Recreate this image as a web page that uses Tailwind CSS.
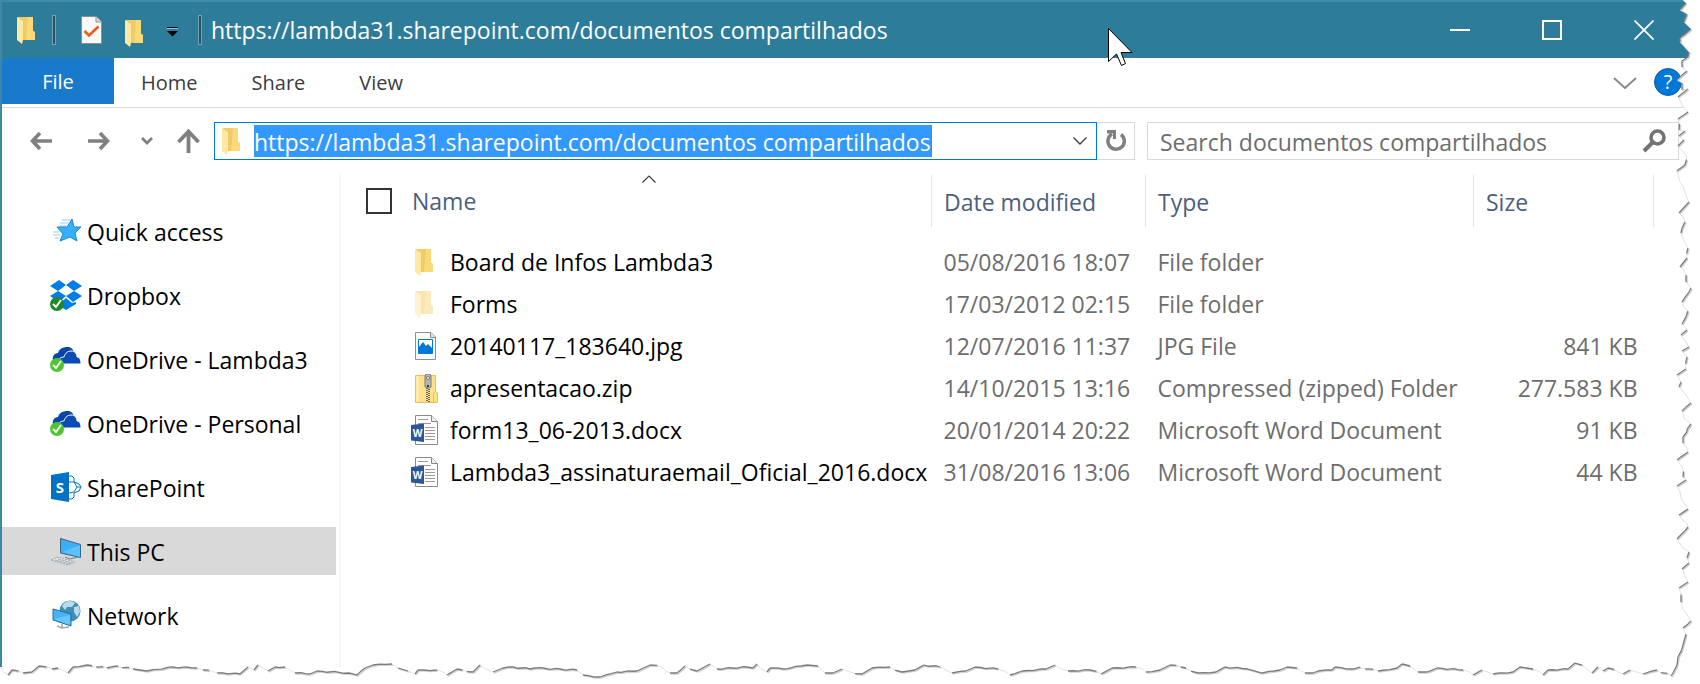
<!DOCTYPE html>
<html lang="en">
  <head>
    <meta charset="UTF-8" />
    <meta name="viewport" content="width=device-width, initial-scale=1.0" />
    <title>documentos compartilhados</title>
    <script src="https://cdn.jsdelivr.net/npm/@tailwindcss/browser@4"></script>
  </head>
  <body class="bg-white">
    <!-- Shared icons -->
    <svg class="hidden" aria-hidden="true">
      <symbol id="folder" viewBox="0 0 18 27">
        <path d="M1 0H16V14L18 15V23H4Z" fill="#f0cb68" />
        <path d="M11 0H16V14L18 15V23H9Z" fill="#f9d978" />
        <path d="M0 0L6 4V23L5 27L0 23Z" fill="#ffe8a3" />
      </symbol>
      <symbol id="onedrive" viewBox="0 0 32 26">
        <path d="M3 13C2 9 5 6 8 6C9 2 13 0 17 0C21 0 23 2 24 5L20 8L12 13Z" fill="#0a45a8" />
        <path d="M8 16C8 11 12 10 14 10C15 6 18 4 21 4C25 4 27 7 27 10C30 10 31 13 31 17H9Z" fill="#0d4bb5" stroke="#fff" />
        <circle cx="7" cy="18" r="7" fill="#4cc62f" />
        <path d="M3 18L6 21L11 14" fill="none" stroke="#fff" stroke-width="2" />
      </symbol>
      <symbol id="word" viewBox="0 0 27 30">
        <path d="M4.500 .5H20.500L26.500 6.500V29.500H4.500Z" fill="#fff" stroke="#8a8a8a" />
        <path d="M20.500 .5V6.500H26.500" fill="#eee" stroke="#8a8a8a" />
        <path d="M7 4.500H17M7 8.500H20M14 12.500H24M14 15.500H24M14 18.500H24M14 21.500H24M14 24.500H24" stroke="#9a9a9a" />
        <path d="M0 10L13 8.500V27L0 25.500Z" fill="#2b579a" />
        <text x="6.500" y="21.500" text-anchor="middle" font-family="Open Sans" font-weight="700" font-size="10" fill="#fff">W</text>
      </symbol>
    </svg>

    <div class="relative min-h-screen pb-4 overflow-hidden font-['Open_Sans',sans-serif] text-[23px] leading-8 text-black">
      <div class="flex flex-col min-h-[667px] border-l-2 border-[#3f87a2]">
        <!-- Title bar -->
        <header class="flex items-center h-[58px] border-t-2 border-[#428ba5] bg-[#2d7c9a] pl-[15px] pr-[10px] text-white">
          <svg class="w-[18px] h-[27px]"><use href="#folder" /></svg>
          <span class="ml-[17px] w-1 h-[30px] border border-[#6ba3b8] bg-[#34505c]"></span>
          <button class="ml-[25px]" aria-label="Properties">
            <svg class="w-[21px] h-7" viewBox="0 0 21 28">
              <path d="M.5 .5H15L20.500 6V27.500H.5Z" fill="#f8f8f8" stroke="#8f8f8f" />
              <path d="M15 .5V6H20.500" fill="#ddd" stroke="#8f8f8f" />
              <path d="M3.500 15L8 19.500L17.500 10.500" fill="none" stroke="#f25a13" stroke-width="2.500" />
            </svg>
          </button>
          <button class="ml-[23px] pt-[6px]" aria-label="New folder">
            <svg class="w-[18px] h-[27px]"><use href="#folder" /></svg>
          </button>
          <button class="ml-[24px] pt-1" aria-label="Customize toolbar">
            <svg class="w-[11px] h-[10px]" viewBox="0 0 11 10">
              <path d="M0 0H11V1H0Z" fill="#000" />
              <path d="M0 1H11V2H0Z" fill="#9cc2d0" />
              <path d="M0 4H11L5.500 9.500Z" fill="#000" />
            </svg>
          </button>
          <span class="ml-[20px] w-1 h-[30px] border border-[#6ba3b8] bg-[#34505c]"></span>
          <h1 class="ml-[9px] flex-1 truncate">https://lambda31.sharepoint.com/documentos compartilhados</h1>
          <button class="flex w-[92px] justify-center" aria-label="Minimize">
            <svg class="w-5 h-5" viewBox="0 0 20 20"><path d="M0 10H20" stroke="#fff" stroke-width="2" /></svg>
          </button>
          <button class="flex w-[92px] justify-center" aria-label="Maximize">
            <svg class="w-5 h-5" viewBox="0 0 20 20"><path d="M1 1H19V19H1Z" fill="none" stroke="#fff" stroke-width="2" /></svg>
          </button>
          <button class="flex w-[92px] justify-center" aria-label="Close">
            <svg class="w-5 h-5" viewBox="0 0 20 20"><path d="M.5 .5L19.500 19.500M19.500 .5L.5 19.500" stroke="#fff" stroke-width="1.700" /></svg>
          </button>
        </header>

        <!-- Ribbon tabs -->
        <nav class="flex h-[50px] items-start border-b border-[#dadbdc] pr-[18px] text-xl text-[#3c3c3c]">
          <button class="h-[46px] w-28 bg-[#1979ca] pt-[2px] text-white">File</button>
          <button class="h-[49px] px-[27px]">Home</button>
          <button class="h-[49px] px-[27px]">Share</button>
          <button class="h-[49px] px-[27px]">View</button>
          <button class="ml-auto flex h-[49px] items-center" aria-label="Expand the ribbon">
            <svg class="w-6 h-3" viewBox="0 0 24 12"><path d="M1 1L12 11L23 1" fill="none" stroke="#8a8a8a" stroke-width="2" /></svg>
          </button>
          <button class="ml-[17px] mt-[10px] h-7 w-7 rounded-full border border-[#0a5fae] bg-[#0078d7] leading-6 text-white" aria-label="Help">?</button>
        </nav>

        <!-- Address bar -->
        <div class="flex h-[67px] items-start pl-7 pr-[21px] pt-[14px]">
          <div class="flex h-[38px] w-[184px] shrink-0 items-center">
            <button aria-label="Back">
              <svg class="w-[22px] h-[18px]" viewBox="0 0 22 18"><path d="M22 9H3M10 1L2.500 9L10 17" fill="none" stroke="#808080" stroke-width="3.600" /></svg>
            </button>
            <button class="ml-9" aria-label="Forward">
              <svg class="w-[22px] h-[18px]" viewBox="0 0 22 18"><path d="M0 9H19M12 1L19.500 9L12 17" fill="none" stroke="#808080" stroke-width="3.600" /></svg>
            </button>
            <button class="ml-[31px]" aria-label="Recent locations">
              <svg class="w-3 h-2" viewBox="0 0 12 8"><path d="M1 1L6 6L11 1" fill="none" stroke="#808080" stroke-width="2.800" /></svg>
            </button>
            <button class="ml-6" aria-label="Up">
              <svg class="w-[23px] h-6" viewBox="0 0 23 24"><path d="M11.500 24V3M1.500 13L11.500 2.500L21.500 13" fill="none" stroke="#808080" stroke-width="3.800" /></svg>
            </button>
          </div>
          <div class="flex h-[38px] min-w-0 flex-1 items-center border border-[#0078d7] pl-[7px] pr-[9px]">
            <svg class="w-[18px] h-[27px] shrink-0"><use href="#folder" /></svg>
            <input class="ml-[14px] h-8 field-sizing-content border-r border-[#d06a10] bg-[#3399ff] pt-px text-white outline-none" type="text" aria-label="Address" value="https://lambda31.sharepoint.com/documentos compartilhados" />
            <button class="ml-auto" aria-label="Previous locations">
              <svg class="w-[14px] h-2" viewBox="0 0 14 8"><path d="M.5 .5L7 7L13.500 .5" fill="none" stroke="#404040" stroke-width="1.400" /></svg>
            </button>
          </div>
          <button class="flex h-[38px] w-[38px] shrink-0 items-center justify-center border border-l-0 border-[#d9d9d9]" aria-label="Refresh">
            <svg class="w-5 h-[22px]" viewBox="0 0 20 22">
              <path d="M15 4.500A8.200 8.200 0 1 1 6 4" fill="none" stroke="#808080" stroke-width="3.600" />
              <path d="M1 0H10V9H7V3.500H1Z" fill="#808080" />
            </svg>
          </button>
          <div class="ml-3 flex h-[38px] w-[532px] items-center border border-[#d9d9d9] pl-3 pr-3">
            <input class="min-w-0 flex-1 pt-px outline-none placeholder:text-[#6d6d6d]" type="text" aria-label="Search" placeholder="Search documentos compartilhados" />
            <button aria-label="Start search">
              <svg class="w-6 h-6" viewBox="0 0 24 24">
                <circle cx="15.500" cy="8.500" r="6.500" fill="none" stroke="#737373" stroke-width="3.600" />
                <path d="M11 13L2 22" stroke="#737373" stroke-width="4" />
              </svg>
            </button>
          </div>
        </div>

        <div class="flex flex-1">
          <!-- Navigation pane -->
          <aside class="w-[339px] shrink-0 border-r-2 border-[#f5f5f5] pr-[3px] pt-8">
            <ul class="flex flex-col gap-4">
              <li>
                <a href="#" class="flex h-12 items-center gap-[5px] pl-12 pt-[2px]">
                  <svg class="w-8 h-8" viewBox="0 0 32 32">
                    <path d="M12 4H20M10 7H18M10 10H16M3 19H10M5 22H9M3 16H9" stroke="#8fd0f5" />
                    <path d="M22 3L24 11H31L25 17L27 25L20 21L10 25L13 18L7 11H17Z" fill="#36b0f8" stroke="#1b87d0" />
                  </svg>
                  Quick access
                </a>
              </li>
              <li>
                <a href="#" class="flex h-12 items-center gap-[5px] pl-12 pt-[2px]">
                  <svg class="w-8 h-8" viewBox="0 0 32 32">
                    <path d="M9 0L16 5L8 11L0 6ZM23 0L32 6L24 11L16 5ZM8 11L16 16L9 22L0 16ZM24 11L32 16L23 22L16 16ZM16 18L22 23L26 22V24L16 30L8 25Z" fill="#007ee5" />
                    <circle cx="7" cy="24" r="7" fill="#1c8a26" />
                    <path d="M3 24L6 27L11 20" fill="none" stroke="#fff" stroke-width="2" />
                  </svg>
                  Dropbox
                </a>
              </li>
              <li>
                <a href="#" class="flex h-12 items-center gap-[5px] pl-12 pt-[2px]">
                  <svg class="w-8 h-[26px]"><use href="#onedrive" /></svg>
                  OneDrive - Lambda3
                </a>
              </li>
              <li>
                <a href="#" class="flex h-12 items-center gap-[5px] pl-12 pt-[2px]">
                  <svg class="w-8 h-[26px]"><use href="#onedrive" /></svg>
                  OneDrive - Personal
                </a>
              </li>
              <li>
                <a href="#" class="flex h-12 items-center gap-[5px] pl-12 pt-[2px]">
                  <svg class="w-8 h-8" viewBox="0 0 32 32">
                    <path d="M19 4L22 4L24 6V10L29 12L31 15L29 19L24 21V25L22 27H19M19 10L24 10L27 15L24 20L19 21M27 15H31" fill="none" stroke="#0072c6" />
                    <path d="M1 3L19 0V30L1 27Z" fill="#0072c6" />
                    <text x="10" y="21" text-anchor="middle" font-family="Open Sans" font-weight="700" font-size="15" fill="#fff">S</text>
                  </svg>
                  SharePoint
                </a>
              </li>
              <li>
                <a href="#" class="flex h-12 items-center gap-[5px] bg-[#d9d9d9] pl-12 pt-[2px]" aria-current="page">
                  <svg class="w-8 h-8" viewBox="0 0 32 32">
                    <path d="M10.500 2.500L30.500 8.500V21.500L10.500 17Z" fill="#3aaef7" stroke="#3f6680" />
                    <path d="M12 16L30 9V21Z" fill="#5cc1fb" />
                    <path d="M15 21L20 23L28 21" fill="none" stroke="#6a7f8c" />
                    <path d="M1 24L8 21L25 26L18 29Z" fill="#e3e6e8" stroke="#9aa3a8" stroke-dasharray="2 1" />
                    <path d="M5 24L20 28M8 23L22 27" stroke="#a8b0b5" />
                  </svg>
                  This PC
                </a>
              </li>
              <li>
                <a href="#" class="flex h-12 items-center gap-[5px] pl-12 pt-[2px]">
                  <svg class="w-8 h-8" viewBox="0 0 32 32">
                    <circle cx="20" cy="11" r="10.500" fill="#3f8fb5" />
                    <path d="M12 6C15 0 22 0 25 3L22 7L17 7L15 10ZM24 7L29 6L30 12L27 17L24 12Z" fill="#b8dcea" />
                    <path d="M3 9L21 14V26L3 20Z" fill="#45b4fa" stroke="#2c6c98" />
                    <path d="M4 19L20 15V25Z" fill="#69c6fc" />
                    <path d="M7 26L12 28L19 27M12 24V27" fill="none" stroke="#a0a8ad" stroke-width="1.500" />
                  </svg>
                  Network
                </a>
              </li>
            </ul>
          </aside>

          <!-- File list -->
          <main class="min-w-0 flex-1 pr-[46px]">
            <table class="w-full table-fixed text-left text-[#6d6d6d]">
              <colgroup>
                <col />
                <col class="w-[214px]" />
                <col class="w-[328px]" />
                <col class="w-[180px]" />
              </colgroup>
              <thead class="text-[#4c607a]">
                <tr class="h-[52px]">
                  <th class="relative border-r border-[#e5e5e5] p-0 pl-[25px] font-normal">
                    <svg class="absolute left-1/2 top-0 ml-[6px] h-2 w-[14px]" viewBox="0 0 14 8"><path d="M.5 7.500L7 1L13.500 7.500" fill="none" stroke="#404040" stroke-width="1.200" /></svg>
                    <div class="flex items-center gap-5">
                      <input type="checkbox" aria-label="Select all" class="h-[26px] w-[26px] appearance-none border-2 border-[#333] bg-white" />
                      Name
                    </div>
                  </th>
                  <th class="border-r border-[#e5e5e5] p-0 pl-3 pt-[2px] font-normal">Date modified</th>
                  <th class="border-r border-[#e5e5e5] p-0 pl-3 pt-[2px] font-normal">Type</th>
                  <th class="border-r border-[#e5e5e5] p-0 pl-3 pt-[2px] font-normal">Size</th>
                </tr>
                <tr class="h-[14px]"><td colspan="4" class="p-0"></td></tr>
              </thead>
              <tbody>
                <tr class="h-[42px]">
                  <td class="p-0 pl-[70px]">
                    <div class="flex items-center gap-3 text-black"><svg class="ml-1 mr-[5px] w-[18px] h-[27px]"><use href="#folder" /></svg>Board de Infos Lambda3</div>
                  </td>
                  <td class="p-0 pl-3">05/08/2016 18:07</td>
                  <td class="p-0 pl-3">File folder</td>
                  <td></td>
                </tr>
                <tr class="h-[42px]">
                  <td class="p-0 pl-[70px]">
                    <div class="flex items-center gap-3 text-black"><svg class="ml-1 mr-[5px] w-[18px] h-[27px] opacity-50"><use href="#folder" /></svg>Forms</div>
                  </td>
                  <td class="p-0 pl-3">17/03/2012 02:15</td>
                  <td class="p-0 pl-3">File folder</td>
                  <td></td>
                </tr>
                <tr class="h-[42px]">
                  <td class="p-0 pl-[70px]">
                    <div class="flex items-center gap-3 text-black">
                      <svg class="w-[27px] h-7" viewBox="0 0 27 28">
                        <path d="M4.500 .5H20L24.500 5V27.500H4.500Z" fill="#fafafa" stroke="#8f8f8f" />
                        <path d="M19.500 .5V5.500H24.500" fill="#ddd" stroke="#8f8f8f" />
                        <path d="M7.500 7.500H21.500V21.500H7.500Z" fill="#fff" stroke="#0078d7" />
                        <path d="M8 21V15L12 10L15 14L17 12L21 16V21Z" fill="#0078d7" />
                      </svg>
                      20140117_183640.jpg
                    </div>
                  </td>
                  <td class="p-0 pl-3">12/07/2016 11:37</td>
                  <td class="p-0 pl-3">JPG File</td>
                  <td class="p-0 pr-4 text-right">841 KB</td>
                </tr>
                <tr class="h-[42px]">
                  <td class="p-0 pl-[70px]">
                    <div class="flex items-center gap-3 text-black">
                      <svg class="w-[27px] h-[29px]" viewBox="0 0 27 29">
                        <path d="M4.500 1.500H24.500V17L26.500 19V28.500H4.500Z" fill="#fde08a" stroke="#e8c04c" />
                        <path d="M6.500 2V28" stroke="#fff0bd" stroke-width="2" />
                        <path d="M22.500 28V20L24.500 17.500" fill="none" stroke="#edc44e" />
                        <path d="M15 0H19L20 2V13L18.500 14H15.500L14 13V2Z" fill="#b5b5b5" stroke="#7d7d7d" />
                        <circle cx="17" cy="4" r="1.500" fill="#fff" stroke="#777" />
                        <path d="M17 11V13" stroke="#333" stroke-width="2" />
                        <path d="M16 14V28" stroke="#666" stroke-width="2" stroke-dasharray="1 1" />
                        <path d="M18 15V28" stroke="#666" stroke-width="2" stroke-dasharray="1 1" />
                      </svg>
                      apresentacao.zip
                    </div>
                  </td>
                  <td class="p-0 pl-3">14/10/2015 13:16</td>
                  <td class="p-0 pl-3 whitespace-nowrap">Compressed (zipped) Folder</td>
                  <td class="p-0 pr-4 text-right">277.583 KB</td>
                </tr>
                <tr class="h-[42px]">
                  <td class="p-0 pl-[70px]">
                    <div class="flex items-center gap-3 text-black"><svg class="w-[27px] h-[30px]"><use href="#word" /></svg>form13_06-2013.docx</div>
                  </td>
                  <td class="p-0 pl-3">20/01/2014 20:22</td>
                  <td class="p-0 pl-3 whitespace-nowrap">Microsoft Word Document</td>
                  <td class="p-0 pr-4 text-right">91 KB</td>
                </tr>
                <tr class="h-[42px]">
                  <td class="p-0 pl-[70px]">
                    <div class="flex items-center gap-3 text-black"><svg class="w-[27px] h-[30px] shrink-0"><use href="#word" /></svg>Lambda3_assinaturaemail_Oficial_2016.docx</div>
                  </td>
                  <td class="p-0 pl-3">31/08/2016 13:06</td>
                  <td class="p-0 pl-3 whitespace-nowrap">Microsoft Word Document</td>
                  <td class="p-0 pr-4 text-right">44 KB</td>
                </tr>
              </tbody>
            </table>
          </main>
        </div>
      </div>

      <!-- Torn paper edge -->
      <svg id="torn" class="pointer-events-none absolute inset-0 h-full w-full" viewBox="0 0 1700 684" preserveAspectRatio="none"></svg>

      <!-- Mouse pointer -->
      <svg class="pointer-events-none absolute left-[1108px] top-7 h-[38px] w-[25px]" viewBox="0 0 25 38">
        <path d="M.5 .5V33.500L8.500 26L13.500 37.500L17.500 35.500L13 24.500H24Z" fill="#fff" stroke="#000" />
      </svg>
    </div>

    <script>
      // x,y pairs, right side from top to bottom
      const right = "1683,0 1686,3 1680,10 1687,14 1684,22 1691,29 1680,38 1680,42 1689,52 1688,57 1682,61 1682,67 1687,71 1677,80 1682,83 1682,90 1688,89 1678,97 1682,104 1688,112 1678,119 1679,130 1685,131 1679,136 1684,140 1678,146 1686,155 1685,165 1677,171 1680,182 1688,200 1689,202 1679,213 1685,222 1681,233 1685,243 1688,248 1687,258 1680,267 1686,275 1686,282 1691,288 1682,302 1683,306 1688,311 1682,324 1687,330 1681,335 1686,342 1689,347 1682,351 1687,357 1686,369 1677,375 1681,382 1679,387 1686,395 1691,403 1682,411 1684,418 1691,424 1683,437 1683,443 1688,452 1677,460 1682,467 1683,477 1686,480 1677,486 1680,492 1684,503 1688,509 1679,515 1687,523 1688,527 1677,539 1682,547 1689,552 1687,558 1689,563 1682,569 1686,578 1688,582 1679,588 1681,602 1686,613 1691,621 1683,628 1686,634 1683,645 1678,657 1677,665 1673,673 1671,676";
      // bottom side from left to right
      const bottom = "0,667 8,675 12,670 23,673 32,672 39,666 52,669 58,668 68,673 73,667 87,665 107,668 118,666 133,669 147,671 173,667 197,668 203,670 223,673 240,674 248,667 254,670 258,665 268,671 275,667 285,667 295,673 310,674 317,671 350,673 357,675 365,668 373,665 392,664 398,668 408,671 415,674 418,670 437,670 447,675 457,669 473,672 480,665 493,672 503,668 513,667 530,669 535,668 577,670 583,675 600,677 617,672 637,671 650,665 662,667 670,673 677,673 685,666 697,671 710,664 717,669 747,667 753,668 757,664 767,672 770,668 783,669 807,665 818,666 825,673 833,673 842,669 850,672 862,674 872,668 890,667 902,672 915,670 924,665 940,667 952,673 966,671 975,667 998,669 1010,675 1022,671 1046,669 1055,665 1068,671 1090,670 1101,674 1112,668 1136,667 1146,672 1160,670 1170,665 1186,668 1198,673 1216,672 1225,667 1248,669 1262,673 1280,670 1287,667 1297,668 1305,673 1313,673 1318,671 1332,670 1335,667 1353,669 1360,667 1378,671 1397,668 1402,664 1410,666 1418,672 1427,672 1437,668 1463,670 1473,675 1482,670 1493,674 1513,672 1520,667 1533,669 1543,675 1548,670 1568,669 1575,663 1582,665 1592,673 1598,667 1603,671 1608,668 1623,674 1630,670 1643,674 1657,670 1671,676";

      const parse = (s) => s.split(" ").map((p) => p.split(",").map(Number));

      // break long straight runs with a small notch
      function roughen(points) {
        const out = [points[0]];
        for (let i = 1; i < points.length; i++) {
          const [x1, y1] = points[i - 1];
          const [x2, y2] = points[i];
          const n = Math.floor(Math.hypot(x2 - x1, y2 - y1) / 5);
          for (let k = 1; k < n; k++) {
            const nudge = ((i * 7 + k * 5) % 3) - 1;
            out.push([x1 + ((x2 - x1) * k) / n + nudge, y1 + ((y2 - y1) * k) / n - nudge * 0.6]);
          }
          out.push([x2, y2]);
        }
        return out;
      }

      const r = roughen(parse(right));
      const b = roughen(parse(bottom));
      const outside = [...r, ...b.slice().reverse(), [0, 684], [1700, 684], [1700, 0]];
      let dark = "";
      let light = "";

      // edges that face down and right get the shadow
      function shade(points, isDark) {
        for (let i = 1; i < points.length; i++) {
          const [x1, y1] = points[i - 1];
          const [x2, y2] = points[i];
          const d = `M${x1} ${y1}L${x2} ${y2}`;
          if (isDark(x2 - x1, y2 - y1)) dark += d;
          else light += d;
        }
      }
      shade(r, (dx) => dx <= 0);
      shade(b, (dx, dy) => dy <= dx * 0.3);

      document.getElementById("torn").innerHTML = `
        <polygon points="${outside.join(" ")}" fill="#fff" />
        <path d="${dark}" transform="translate(1 1)" stroke="#d0d0d0" stroke-width="1.500" fill="none" />
        <path d="${dark}" stroke="#7c7c7c" stroke-width="1.300" fill="none" />
        <path d="${light}" stroke="#ccc" stroke-width=".6" fill="none" />`;
    </script>
  </body>
</html>
